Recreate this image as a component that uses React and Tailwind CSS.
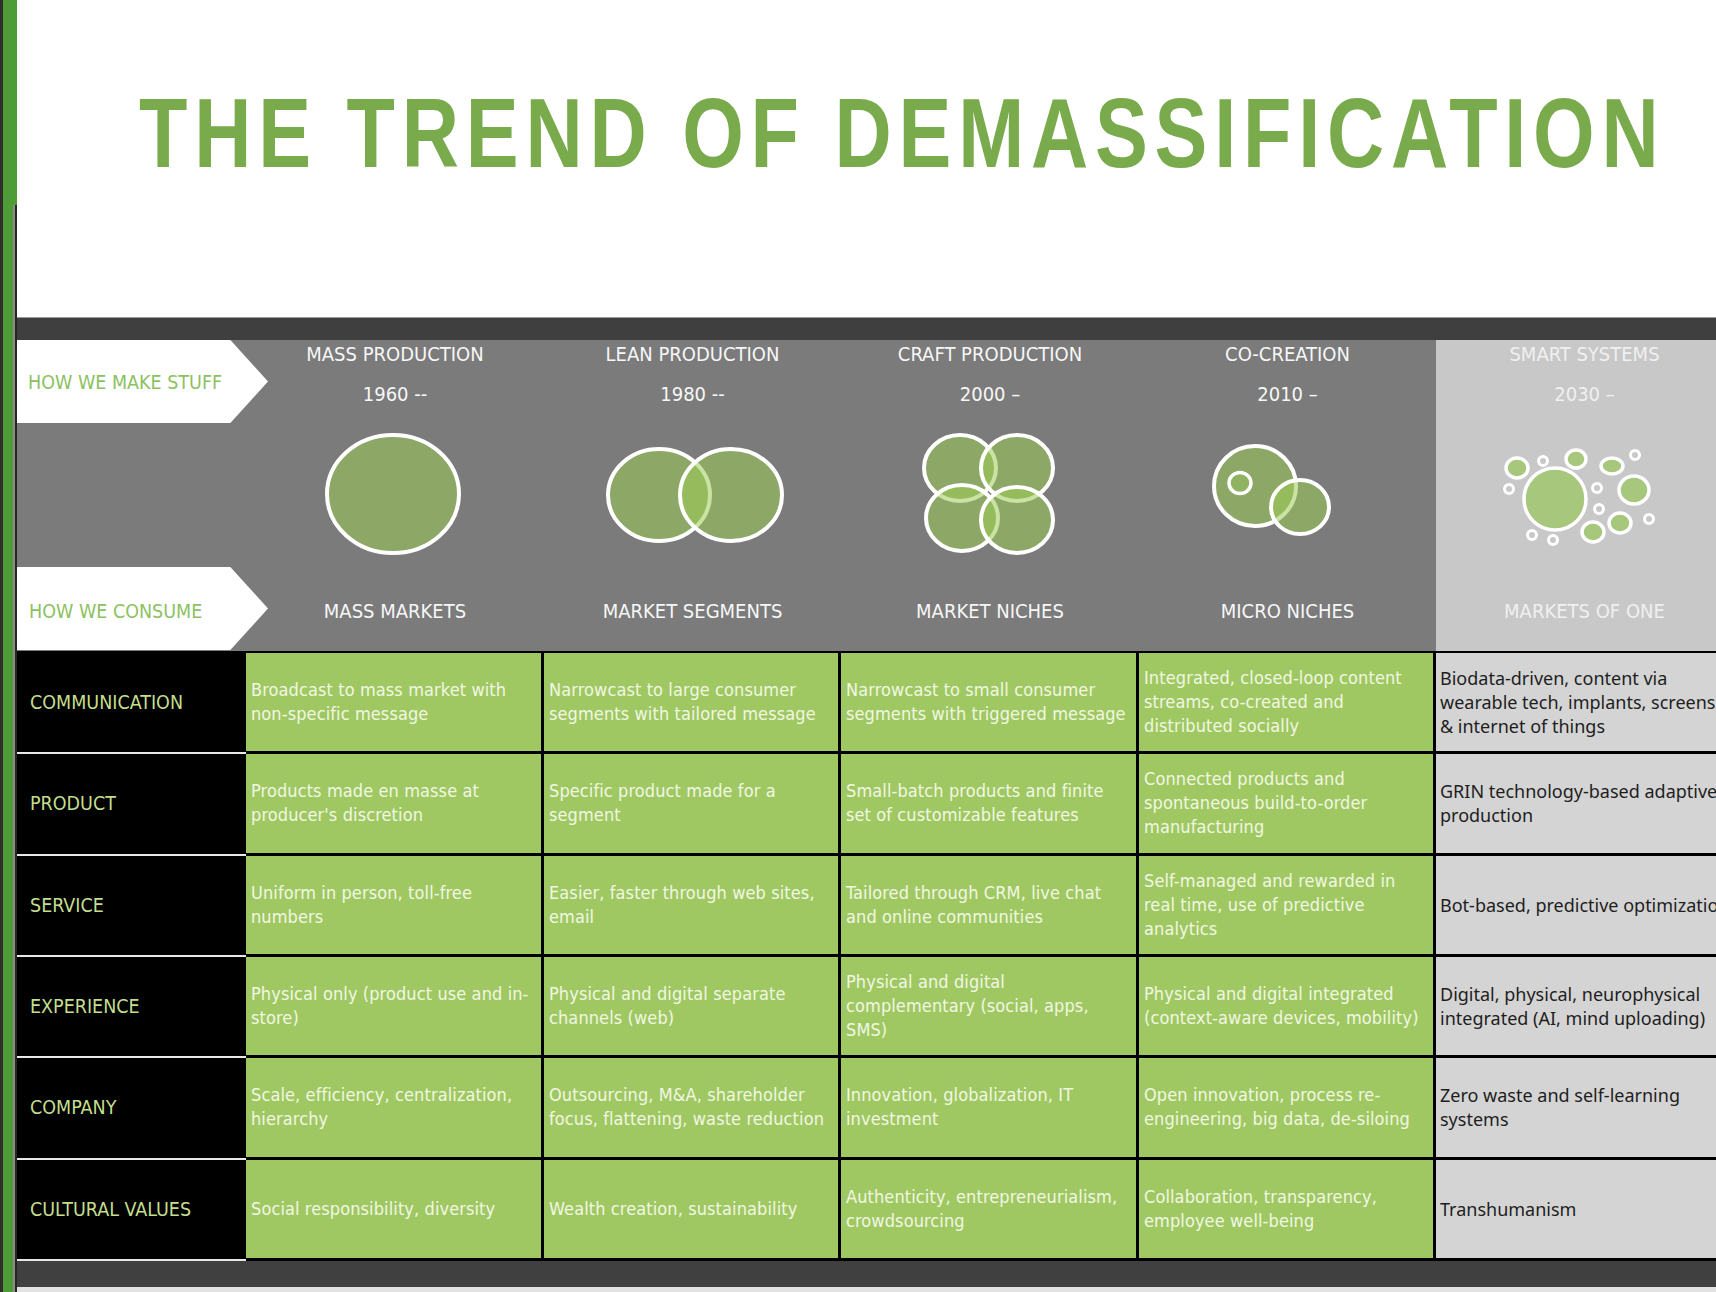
import React from "react";

const G_FILL = "#9ccc55";

function IconMass() {
  return (
    <svg width="298" height="140" viewBox="0 0 298 140">
      <ellipse cx="147" cy="69" rx="66" ry="59" fill={G_FILL} fillOpacity="0.55" stroke="#fff" strokeWidth="4" />
    </svg>
  );
}

function IconLean() {
  return (
    <svg width="297" height="140" viewBox="0 0 297 140">
      <ellipse cx="115" cy="70" rx="51" ry="46" fill={G_FILL} fillOpacity="0.55" stroke="#fff" strokeWidth="4" />
      <ellipse cx="187" cy="70" rx="51" ry="46" fill={G_FILL} fillOpacity="0.55" stroke="#fff" strokeWidth="4" />
    </svg>
  );
}

function IconCraft() {
  return (
    <svg width="298" height="140" viewBox="0 0 298 140">
      <ellipse cx="119" cy="43" rx="36" ry="33" fill={G_FILL} fillOpacity="0.55" stroke="#fff" strokeWidth="4" />
      <ellipse cx="176" cy="43" rx="36" ry="33" fill={G_FILL} fillOpacity="0.55" stroke="#fff" strokeWidth="4" />
      <ellipse cx="121" cy="93" rx="36" ry="33" fill={G_FILL} fillOpacity="0.55" stroke="#fff" strokeWidth="4" />
      <ellipse cx="176" cy="95" rx="36" ry="33" fill={G_FILL} fillOpacity="0.55" stroke="#fff" strokeWidth="4" />
    </svg>
  );
}

function IconCo() {
  return (
    <svg width="297" height="140" viewBox="0 0 297 140">
      <ellipse cx="116" cy="61" rx="41" ry="40" fill={G_FILL} fillOpacity="0.55" stroke="#fff" strokeWidth="4" />
      <ellipse cx="101" cy="58" rx="11" ry="10.5" fill={G_FILL} fillOpacity="0.3" stroke="#fff" strokeWidth="3.5" />
      <ellipse cx="161" cy="82" rx="29" ry="27" fill={G_FILL} fillOpacity="0.55" stroke="#fff" strokeWidth="4" />
    </svg>
  );
}

function IconSmart() {
  const filled = [
    [119, 74, 31, 31],
    [81, 43, 11, 10],
    [140, 34, 10, 9],
    [176, 41, 11, 8],
    [198, 65, 15, 14],
    [184, 98, 11, 10],
    [157, 107, 11, 10],
  ];
  const rings = [
    [107, 36],
    [199, 30],
    [73, 64],
    [161, 63],
    [163, 84],
    [213, 94],
    [96, 110],
    [117, 115],
  ];
  return (
    <svg width="297" height="140" viewBox="0 0 297 140">
      {filled.map(([x, y, rx, ry], i) => (
        <ellipse key={"f" + i} cx={x} cy={y} rx={rx} ry={ry} fill="#a6c77c" stroke="#fff" strokeWidth="3.5" />
      ))}
      {rings.map(([x, y], i) => (
        <circle key={"r" + i} cx={x} cy={y} r="4.5" fill="#c8c8c8" stroke="#fff" strokeWidth="3" />
      ))}
    </svg>
  );
}

function HeadCol({ title, year, bottom, icon, light }) {
  return (
    <div
      className={
        light
          ? "flex flex-col items-center pt-[3px] bg-[#c8c8c8] text-[#f0f0f0] font-['DejaVu_Sans_Condensed',sans-serif]"
          : "flex flex-col items-center pt-[3px] text-[#f7f7f7] font-['DejaVu_Sans_Condensed',sans-serif]"
      }
    >
      <div className="h-[22px] leading-[22px] text-[20px] whitespace-nowrap">{title}</div>
      <div className="mt-[18px] h-[22px] leading-[22px] text-[20px] whitespace-nowrap">{year}</div>
      <div className="mt-[20px] h-[140px]">{icon}</div>
      <div className="mt-[35px] h-[22px] leading-[22px] text-[20px] whitespace-nowrap">{bottom}</div>
    </div>
  );
}

const rows = [
  {
    label: "COMMUNICATION",
    cells: [
      ["Broadcast to mass market with", "non-specific message"],
      ["Narrowcast to large consumer", "segments with tailored message"],
      ["Narrowcast to small consumer", "segments with triggered message"],
      ["Integrated, closed-loop content", "streams, co-created and", "distributed socially"],
    ],
    smart: ["Biodata-driven, content via", "wearable tech, implants, screens", "& internet of things"],
  },
  {
    label: "PRODUCT",
    cells: [
      ["Products made en masse at", "producer's discretion"],
      ["Specific product made for a", "segment"],
      ["Small-batch products and finite", "set of customizable features"],
      ["Connected products and", "spontaneous build-to-order", "manufacturing"],
    ],
    smart: ["GRIN technology-based adaptive", "production"],
  },
  {
    label: "SERVICE",
    cells: [
      ["Uniform in person, toll-free", "numbers"],
      ["Easier, faster through web sites,", "email"],
      ["Tailored through CRM, live chat", "and online communities"],
      ["Self-managed and rewarded in", "real time, use of predictive", "analytics"],
    ],
    smart: ["Bot-based, predictive optimization"],
  },
  {
    label: "EXPERIENCE",
    cells: [
      ["Physical only (product use and in-", "store)"],
      ["Physical and digital separate", "channels (web)"],
      ["Physical and digital", "complementary (social, apps,", "SMS)"],
      ["Physical and digital integrated", "(context-aware devices, mobility)"],
    ],
    smart: ["Digital, physical, neurophysical", "integrated (AI, mind uploading)"],
  },
  {
    label: "COMPANY",
    cells: [
      ["Scale, efficiency, centralization,", "hierarchy"],
      ["Outsourcing, M&A, shareholder", "focus, flattening, waste reduction"],
      ["Innovation, globalization, IT", "investment"],
      ["Open innovation, process re-", "engineering, big data, de-siloing"],
    ],
    smart: ["Zero waste and self-learning", "systems"],
  },
  {
    label: "CULTURAL VALUES",
    cells: [
      ["Social responsibility, diversity"],
      ["Wealth creation, sustainability"],
      ["Authenticity, entrepreneurialism,", "crowdsourcing"],
      ["Collaboration, transparency,", "employee well-being"],
    ],
    smart: ["Transhumanism"],
  },
];

function Lines({ lines }) {
  return lines.map((l, i) => (
    <div key={i} className="whitespace-nowrap">
      {l}
    </div>
  ));
}

export default function App() {
  return (
    <div className="w-[1716px] h-[1292px] overflow-hidden bg-white flex">
      {/* left stripe */}
      <div className="w-[17px] shrink-0 flex flex-col border-l-[3px] border-[#2e2e2e] bg-[#4e9c35]">
        <div className="h-[205px]" />
        <div className="flex-1 flex justify-end">
          <div className="w-[2px] bg-[#8a8a8a]" />
          <div className="w-[2px] bg-[#262626]" />
        </div>
      </div>

      <div className="flex-1 min-w-0 flex flex-col">
        {/* title */}
        <div className="h-[317px] shrink-0 pl-[122px] pt-[83px]">
          <h1 className="origin-left scale-x-[0.8] text-[99px] leading-none font-bold text-[#79aa4b] tracking-[8.5px] whitespace-nowrap font-['Liberation_Sans',sans-serif]">
            THE TREND OF DEMASSIFICATION
          </h1>
        </div>

        {/* dark band */}
        <div className="h-[23px] shrink-0 bg-[#3f3f3f] border-t border-[#9a9a9a]" />

        {/* header */}
        <div className="h-[311px] shrink-0 bg-[#7b7b7b] grid grid-cols-[229px_298px_297px_298px_297px_297px]">
          <div className="flex flex-col justify-between pb-[1px] font-['DejaVu_Sans_Condensed',sans-serif]">
            <div className="relative z-10 w-[251px] h-[83px] bg-white [clip-path:polygon(0_0,85%_0,100%_50%,85%_100%,0_100%)] flex items-center pl-[11px] pt-[2px] text-[19.5px] text-[#8cc15f] whitespace-nowrap">
              HOW WE MAKE STUFF
            </div>
            <div className="relative z-10 w-[251px] h-[83px] bg-white [clip-path:polygon(0_0,85%_0,100%_50%,85%_100%,0_100%)] flex items-center pl-[12px] pt-[6px] text-[19.5px] text-[#8cc15f] whitespace-nowrap">
              HOW WE CONSUME
            </div>
          </div>
          <HeadCol title="MASS PRODUCTION" year="1960 --" bottom="MASS MARKETS" icon={<IconMass />} />
          <HeadCol title="LEAN PRODUCTION" year="1980 --" bottom="MARKET SEGMENTS" icon={<IconLean />} />
          <HeadCol title="CRAFT PRODUCTION" year="2000 –" bottom="MARKET NICHES" icon={<IconCraft />} />
          <HeadCol title="CO-CREATION" year="2010 –" bottom="MICRO NICHES" icon={<IconCo />} />
          <HeadCol title="SMART SYSTEMS" year="2030 –" bottom="MARKETS OF ONE" icon={<IconSmart />} light />
        </div>

        {/* body */}
        <div className="h-[610px] shrink-0 flex flex-col border-t-2 border-black bg-black">
          {rows.map((r) => (
            <div key={r.label} className="flex-1 min-h-0 grid grid-cols-[229px_298px_297px_298px_297px_297px]">
              <div className="bg-black border-b-2 border-[#e8e8e8] flex items-center pl-[13px] text-[19.5px] text-[#c3df8d] whitespace-nowrap font-['DejaVu_Sans_Condensed',sans-serif]">
                {r.label}
              </div>
              {r.cells.map((c, i) => (
                <div
                  key={i}
                  className="bg-[#a0c862] border-b-[3px] border-r-[3px] border-black flex flex-col justify-center pl-[5px] overflow-hidden text-[18px] leading-[24px] tracking-[0.1px] text-[#f0f7e3] font-['DejaVu_Sans_Condensed',sans-serif]"
                >
                  <Lines lines={c} />
                </div>
              ))}
              <div className="bg-[#d4d4d4] border-b-[3px] border-black flex flex-col justify-center pl-[4px] overflow-hidden text-[18px] leading-[24px] text-[#1e1e1e] font-['Noto_Sans',sans-serif]">
                <Lines lines={r.smart} />
              </div>
            </div>
          ))}
        </div>

        {/* bottom band */}
        <div className="h-[26px] shrink-0 bg-[#404040]" />
        <div className="flex-1 bg-[#e2e2e2]" />
      </div>
    </div>
  );
}
